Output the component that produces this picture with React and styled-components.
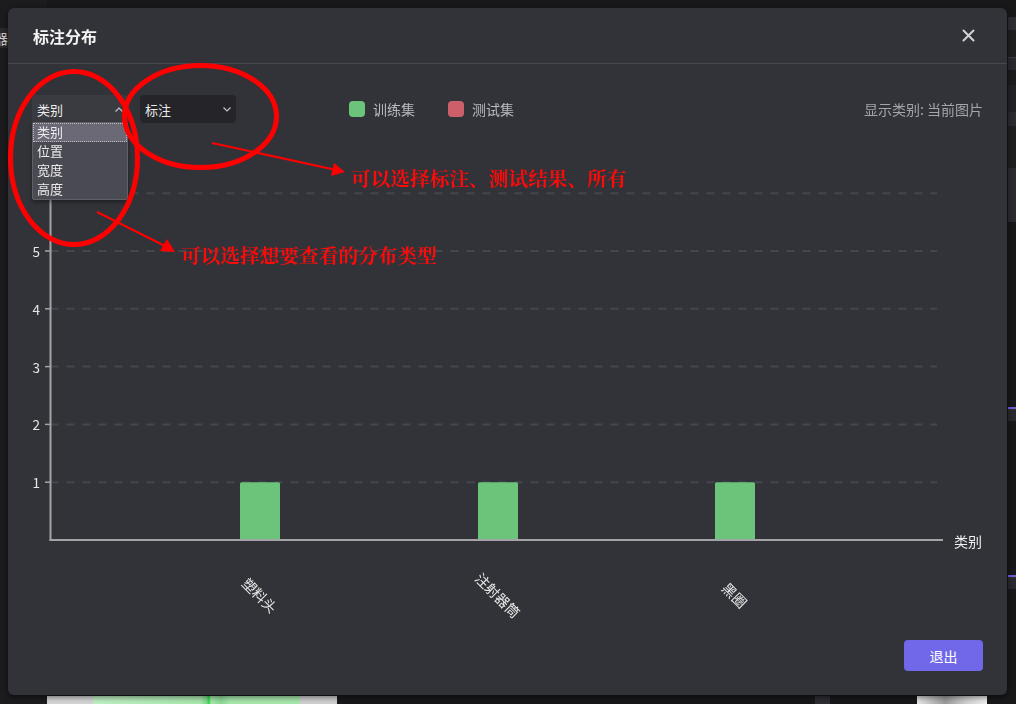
import styled, { createGlobalStyle } from "styled-components";

const GlobalStyle = createGlobalStyle`
  html, body { margin: 0; padding: 0; background: #18181b; }
  body { font-family: "Noto Sans CJK SC", "Noto Sans", sans-serif; overflow: hidden; }
`;

/* ---------- app behind the modal ---------- */
const Shell = styled.div`
  width: 1016px;
  height: 704px;
  display: grid;
  grid-template-columns: 47px 1fr 8px;
  background: #18181b;
  overflow: hidden;
`;
const LeftRail = styled.div`
  display: flex;
  flex-direction: column;
  padding-top: 28px;
  background: #1c1c1f;
`;
const RailItem = styled.div`
  height: 20px;
  width: 8px;
  overflow: hidden;
  display: flex;
  justify-content: flex-end;
  align-items: center;
  background: #2a2a2e;
  color: #d0d0d0;
  font-size: 14px;
  white-space: nowrap;
  border-bottom: 9px solid #1c1c1f;
  box-shadow: 0 10px 0 -9px #3a3a40;
`;
const Center = styled.div`
  display: flex;
  flex-direction: column;
  justify-content: flex-end;
`;
const Filmstrip = styled.div`
  height: 8px;
  display: flex;
`;
const Thumb = styled.div`
  width: ${(p) => p.$w}px;
  margin-left: ${(p) => p.$ml || 0}px;
  background: ${(p) => p.$bg};
`;
const RightRail = styled.div`
  display: flex;
  flex-direction: column;
  padding-top: 17px;
`;
const RailBlock = styled.div`
  height: ${(p) => p.$h}px;
  background: ${(p) => p.$bg};
`;

/* ---------- modal ---------- */
const Modal = styled.section`
  position: fixed;
  left: 8px;
  top: 8px;
  width: 999px;
  height: 687px;
  display: flex;
  flex-direction: column;
  background: #323338;
  border-radius: 6px;
  box-shadow: 0 2px 6px rgba(0, 0, 0, 0.55);
  color: #e8e8e8;
`;
const Header = styled.header`
  height: 55px;
  padding: 0 32px 0 25px;
  display: flex;
  align-items: center;
  justify-content: space-between;
  border-bottom: 1px solid #48494e;
`;
const Title = styled.h2`
  margin: 0;
  font-size: 16px;
  font-weight: 700;
  color: #f4f4f4;
`;
const CloseButton = styled.button`
  width: 14px;
  height: 14px;
  padding: 0;
  border: 0;
  background: none;
  display: flex;
  align-items: center;
  justify-content: center;
`;
const Body = styled.div`
  flex: 1;
  display: flex;
  flex-direction: column;
  padding: 31px 24px 24px 24px;
`;
const Toolbar = styled.div`
  height: 28px;
  display: flex;
  align-items: center;
  position: relative;
`;
const Select = styled.div`
  width: 96px;
  height: 28px;
  box-sizing: border-box;
  padding: 0 5px 0 5px;
  display: flex;
  align-items: center;
  justify-content: space-between;
  font-size: 13px;
  color: #ececec;
  border-radius: ${(p) => (p.$open ? "3px 3px 0 0" : "4px")};
  background: ${(p) => (p.$open ? "#3a3b41" : "#242429")};
  margin-left: ${(p) => p.$ml || 0}px;
  position: relative;
`;
const Menu = styled.ul`
  position: absolute;
  top: 27px;
  left: 0;
  width: 96px;
  box-sizing: border-box;
  margin: 0;
  padding: 0;
  list-style: none;
  background: #4a4a52;
  border: 1px solid #5f5f67;
  border-radius: 2px;
  box-shadow: 0 2px 4px rgba(0, 0, 0, 0.4);
  z-index: 2;
`;
const MenuItem = styled.li`
  height: 19px;
  line-height: 18px;
  padding-left: 4px;
  font-size: 13px;
  color: #ececec;
  box-sizing: border-box;
  background: ${(p) => (p.$active ? "#6a6975" : "transparent")};
  outline: ${(p) => (p.$active ? "1px dotted #bdbdc4" : "none")};
  outline-offset: -1px;
`;
const Legend = styled.div`
  margin-left: 113px;
  display: flex;
  align-items: center;
  gap: 33px;
`;
const LegendItem = styled.div`
  display: flex;
  align-items: center;
  gap: 8px;
  font-size: 14px;
  color: #b8bbc2;
`;
const Swatch = styled.span`
  width: 16px;
  height: 16px;
  border-radius: 4px;
  background: ${(p) => p.$color};
`;
const ScopeText = styled.div`
  margin-left: auto;
  font-size: 14px;
  color: #a3a6ad;
`;
const ChartSvg = styled.svg`
  display: block;
  width: 951px;
  height: 505px;
  font-family: "Noto Sans CJK SC", "Noto Sans", sans-serif;
`;
const Footer = styled.div`
  margin-top: 12px;
  display: flex;
  justify-content: flex-end;
`;
const ExitButton = styled.button`
  width: 79px;
  height: 31px;
  border: 0;
  border-radius: 4px;
  background: #7068e8;
  color: #ffffff;
  font-family: inherit;
  font-size: 14px;
`;

/* ---------- red annotations ---------- */
const Annotations = styled.svg`
  position: fixed;
  left: 0;
  top: 0;
  width: 1016px;
  height: 704px;
  pointer-events: none;
  z-index: 5;
  font-family: "Noto Serif CJK SC", "Noto Sans CJK SC", serif;
  font-weight: 700;
`;

const Chevron = ({ up }) => (
  <svg width="8" height="5" viewBox="0 0 8 5">
    <path
      d={up ? "M0.5 4.5 L4 1 L7.5 4.5" : "M0.5 0.5 L4 4 L7.5 0.5"}
      fill="none"
      stroke="#c4c4c8"
      strokeWidth="1.2"
    />
  </svg>
);

const BASE = 417;
const STEP = 57.8;
const AXIS_X = 18.5;
// the 6 line sits under the open menu, its label is hidden there
const TICKS = [1, 2, 3, 4, 5, 6];
const BARS = [
  { x: 208, name: "塑料头", value: 1 },
  { x: 446, name: "注射器筒", value: 1 },
  { x: 683, name: "黑圈", value: 1 },
];

function Chart() {
  return (
    <ChartSvg viewBox="0 0 951 505">
      {TICKS.map((t) => {
        const y = BASE - t * STEP;
        return (
          <g key={t}>
            <line x1={AXIS_X} x2="905" y1={y} y2={y} stroke="#46474d" strokeWidth="2" strokeDasharray="8 8" />
            <line x1="13" x2={AXIS_X} y1={y} y2={y} stroke="#a4a4a8" strokeWidth="1.5" />
            {t < 6 && (
              <text x="8" y={y} textAnchor="end" dominantBaseline="central" fontSize="13.5" fill="#e6e6e6">
                {t}
              </text>
            )}
          </g>
        );
      })}
      {BARS.map((b) => (
        <g key={b.name}>
          <rect x={b.x} y={BASE - b.value * STEP} width="40" height={b.value * STEP} rx="1.5" fill="#6cc37a" />
          <text
            x={b.x + 20}
            y={472}
            textAnchor="middle"
            dominantBaseline="central"
            fontSize="14"
            fill="#eaeaea"
            transform={`rotate(45 ${b.x + 20} 472)`}
          >
            {b.name}
          </text>
        </g>
      ))}
      <line x1={AXIS_X} x2={AXIS_X} y1={BASE - 6 * STEP} y2={BASE + 1} stroke="#a4a4a8" strokeWidth="2" />
      <line x1={AXIS_X - 1} x2="911" y1={BASE} y2={BASE} stroke="#a4a4a8" strokeWidth="2" />
      <text x="922" y={BASE + 1} dominantBaseline="central" fontSize="14" fill="#f0f0f0">
        类别
      </text>
    </ChartSvg>
  );
}

export default function App() {
  return (
    <>
      <GlobalStyle />
      <Shell>
        <LeftRail>
          <RailItem>器</RailItem>
        </LeftRail>
        <Center>
          <Filmstrip>
            <Thumb $w={46} $bg="#d6d6d6" />
            <Thumb $w={207} $bg="linear-gradient(90deg,#c0f0c4 0,#a8e8ad 52%,#7fd889 55%,#1fe03a 56%,#a8e8ad 57%,#8ed897 62%,#a8e8ad 66%,#a8e8ad 100%)" />
            <Thumb $w={37} $bg="#d0d0d0" />
            <Thumb $w={15} $ml={478} $bg="#2e2e33" />
            <Thumb $w={70} $ml={87} $bg="linear-gradient(90deg,#e8e8e8,#9a9a9a 40%,#cfcfcf 70%,#f0f0f0)" />
          </Filmstrip>
        </Center>
        <RightRail>
          <RailBlock $h={13} $bg="#2e2e33" />
          <RailBlock $h={27} $bg="#1f1f22" />
          <RailBlock $h={1} $bg="#3a3a40" />
          <RailBlock $h={12} $bg="#2a2a2e" />
          <RailBlock $h={15} $bg="#1c1c1f" />
          <RailBlock $h={27} $bg="#222226" />
          <RailBlock $h={14} $bg="#2b2b30" />
          <RailBlock $h={42} $bg="#1f1f22" />
          <RailBlock $h={54} $bg="#2c2c30" />
          <RailBlock $h={185} $bg="#18181a" />
          <RailBlock $h={2} $bg="#6a5fe0" />
          <RailBlock $h={12} $bg="#2a2a2e" />
          <RailBlock $h={154} $bg="#18181a" />
          <RailBlock $h={2} $bg="#6a5fe0" />
          <RailBlock $h={12} $bg="#2a2a2e" />
        </RightRail>
      </Shell>

      <Modal>
        <Header>
          <Title>标注分布</Title>
          <CloseButton aria-label="close">
            <svg width="13" height="13" viewBox="0 0 13 13">
              <path d="M1.5 1.5 L11.5 11.5 M11.5 1.5 L1.5 11.5" stroke="#d2d2d6" strokeWidth="2" strokeLinecap="round" />
            </svg>
          </CloseButton>
        </Header>
        <Body>
          <Toolbar>
            <Select $open>
              <span>类别</span>
              <Chevron up />
              <Menu>
                <MenuItem $active>类别</MenuItem>
                <MenuItem>位置</MenuItem>
                <MenuItem>宽度</MenuItem>
                <MenuItem>高度</MenuItem>
              </Menu>
            </Select>
            <Select $ml={12}>
              <span>标注</span>
              <Chevron />
            </Select>
            <Legend>
              <LegendItem>
                <Swatch $color="#6cc37a" />
                训练集
              </LegendItem>
              <LegendItem>
                <Swatch $color="#cc5f69" />
                测试集
              </LegendItem>
            </Legend>
            <ScopeText>显示类别: 当前图片</ScopeText>
          </Toolbar>
          <Chart />
          <Footer>
            <ExitButton>退出</ExitButton>
          </Footer>
        </Body>
      </Modal>

      <Annotations viewBox="0 0 1016 704">
        <ellipse cx="74" cy="158" rx="63.5" ry="86.5" fill="none" stroke="#ff0000" strokeWidth="5" />
        <ellipse cx="200.5" cy="116.5" rx="76" ry="51" fill="none" stroke="#ff0000" strokeWidth="5" />
        <line x1="212" y1="143" x2="334" y2="169.5" stroke="#ff0000" strokeWidth="2" />
        <polygon points="345,172 331,176 334,163" fill="#ff0000" />
        <line x1="97" y1="212" x2="165" y2="246" stroke="#ff0000" strokeWidth="2" />
        <polygon points="175,252 160,251 167,239" fill="#ff0000" />
        <text x="351" y="177" dominantBaseline="central" fontSize="19.7" fill="#ff0a0a">
          可以选择标注、测试结果、所有
        </text>
        <text x="181" y="254" dominantBaseline="central" fontSize="19.7" fill="#ff0a0a">
          可以选择想要查看的分布类型
        </text>
      </Annotations>
    </>
  );
}
